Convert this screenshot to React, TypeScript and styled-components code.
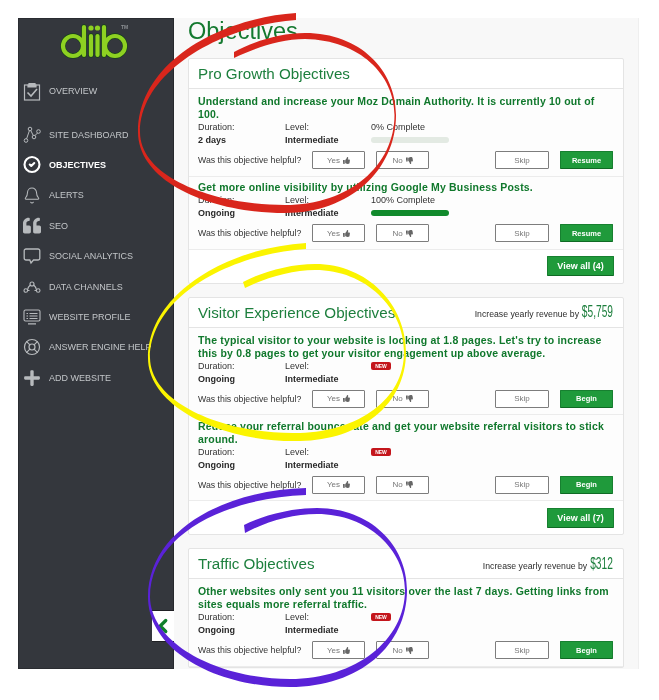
import React from "react";
import styled, { createGlobalStyle } from "styled-components";
import { CircleCheck, Bell, LifeBuoy, ChevronLeft } from "lucide-react";
import { FaQuoteLeft, FaPlus, FaThumbsUp, FaThumbsDown } from "react-icons/fa";

const Global = createGlobalStyle`
  html, body { margin: 0; padding: 0; background: #fff; }
  body { font-family: "Liberation Sans", Arial, sans-serif; }
`;

const Stage = styled.div`
  position: relative;
  width: 659px;
  height: 700px;
  overflow: hidden;
  background: #fff;
`;
const Page = styled.div`
  display: flex;
  padding: 18px 20px 0 18px;
  height: 651px;
  filter: blur(0.35px);
`;
const Sidebar = styled.nav`
  position: relative;
  width: 156px;
  height: 651px;
  flex: none;
  box-sizing: border-box;
  background: #34373d;
  border: 1px solid #2a2c31;
  border-right-color: #26282c;
`;
const LogoBox = styled.div`
  height: 57px;
  padding-left: 41px;
  box-sizing: border-box;
  position: relative;
`;
const Tm = styled.span`
  position: absolute;
  left: 102px;
  top: 5px;
  font-size: 5px;
  font-weight: 700;
  color: #8b8f93;
`;
const NavList = styled.div`
  display: flex;
  flex-direction: column;
`;
const NavItem = styled.div<{ $top?: number; $active?: boolean }>`
  display: flex;
  align-items: center;
  gap: 8px;
  height: 30.4px;
  margin-top: ${(p) => p.$top ?? 0}px;
  padding-left: 4px;
  color: ${(p) => (p.$active ? "#fff" : "#c3c6c9")};
  font-size: 9px;
  font-weight: ${(p) => (p.$active ? 700 : 400)};
  white-space: nowrap;
`;
const NavIcon = styled.span<{ $active?: boolean }>`
  width: 18px;
  height: 18px;
  flex: none;
  display: flex;
  align-items: center;
  justify-content: center;
  color: ${(p) => (p.$active ? "#fff" : "#b7babd")};
`;
const Collapse = styled.div`
  position: absolute;
  left: 133px;
  top: 591px;
  width: 22px;
  height: 32px;
  background: #fff;
  border-top: 1px solid #1f2024;
  border-bottom: 1px solid #1f2024;
  box-sizing: border-box;
  display: flex;
  align-items: center;
  justify-content: center;
  color: #0f7f2c;
`;
const Main = styled.main`
  width: 465px;
  height: 651px;
  flex: none;
  box-sizing: border-box;
  padding: 0 14px 0 14px;
  background: #f8f8f8;
  border-right: 1px solid #efefef;
  overflow: hidden;
`;
const PageTitle = styled.h1`
  margin: 0;
  height: 40px;
  line-height: 27px;
  font-size: 23.5px;
  font-weight: 400;
  color: #14792f;
`;
const Card = styled.section`
  background: #fff;
  border: 1px solid #e4e4e4;
  border-radius: 2px;
  margin-bottom: 13px;
  box-sizing: border-box;
`;
const CardHead = styled.header`
  height: 29px;
  padding: 0 10px 0 9px;
  display: flex;
  align-items: center;
  justify-content: space-between;
  border-bottom: 1px solid #e4e4e4;
`;
const CardTitle = styled.h2`
  margin: 0;
  font-size: 15.2px;
  font-weight: 400;
  color: #1d7f3d;
`;
const Revenue = styled.div`
  display: flex;
  align-items: baseline;
  gap: 3px;
  font-size: 8.7px;
  color: #2b2b2b;
`;
const Amount = styled.span<{ $trim: number }>`
  display: inline-block;
  font-size: 17px;
  color: #1d7f3d;
  transform: scaleX(0.6);
  transform-origin: right center;
  margin-left: -${(p) => p.$trim}px;
`;
const Row = styled.div`
  padding: 4.5px 10px 6.5px 9px;
  border-bottom: 1px solid #ececec;
  background: #fdfdfd;
  &:first-of-type { padding-top: 6px; }
`;
const RowTitle = styled.div`
  font-size: 10.5px;
  line-height: 13px;
  font-weight: 700;
  letter-spacing: 0.18px;
  color: #10782c;
`;
const Meta = styled.div`
  display: grid;
  grid-template-columns: 87px 86px 1fr;
  font-size: 9px;
  line-height: 13px;
  color: #333;
`;
const Value = styled.div`
  font-weight: 700;
  color: #2a2a2a;
`;
const New = styled.span`
  display: inline-block;
  width: 20px;
  height: 8px;
  line-height: 8px;
  border-radius: 2px;
  background: #c4161c;
  color: #fff;
  font-size: 5px;
  font-weight: 700;
  text-align: center;
  vertical-align: 1px;
`;
const Track = styled.div`
  width: 78px;
  height: 6px;
  margin-top: 3px;
  border-radius: 3px;
  background: #e3eae3;
  overflow: hidden;
`;
const Fill = styled.div`
  height: 100%;
  background: #118a2c;
`;
const Actions = styled.div`
  display: flex;
  align-items: center;
  margin-top: 4px;
  height: 18px;
`;
const Ask = styled.span`
  width: 114px;
  flex: none;
  font-size: 8.75px;
  color: #333;
  white-space: nowrap;
`;
const Ghost = styled.button<{ $left?: number; $wide?: boolean }>`
  width: ${(p) => (p.$wide ? 54 : 53)}px;
  height: 18px;
  padding: 0;
  margin-left: ${(p) => p.$left ?? 0}px;
  background: #fff;
  border: 1px solid #7d7d7d;
  border-radius: 1px;
  color: #777;
  font: 8px "Liberation Sans", Arial, sans-serif;
  display: inline-flex;
  align-items: center;
  justify-content: center;
  gap: 3px;
`;
const Solid = styled.button<{ $wide?: boolean; $left?: number }>`
  width: ${(p) => (p.$wide ? 67 : 53)}px;
  height: ${(p) => (p.$wide ? 20 : 18)}px;
  padding: 0;
  margin-left: ${(p) => p.$left ?? 0}px;
  background: #1f9a3b;
  border: 1px solid #178030;
  border-bottom-color: #0f6a24;
  border-radius: 1px;
  color: #fff;
  font: 700 ${(p) => (p.$wide ? 9 : 7.5)}px "Liberation Sans", Arial, sans-serif;
`;
const Foot = styled.footer`
  padding: 6.5px 9px 6.5px;
  display: flex;
  justify-content: flex-end;
`;
const Scribble = styled.svg`
  position: absolute;
  left: 0;
  top: 0;
  pointer-events: none;
`;

const Clipboard = () => (
  <svg width="18" height="19" viewBox="0 0 18 19" fill="none" stroke="currentColor" strokeWidth="1.2">
    <rect x="1.5" y="3" width="15" height="15" />
    <path d="M6 3V1.5H12V3H13V5H5V3Z" fill="currentColor" />
    <path d="M4.5 10.5 8 14 14 7" strokeWidth="1.6" />
  </svg>
);
const Bubble = () => (
  <svg width="18" height="18" viewBox="0 0 18 18" fill="none" stroke="currentColor" strokeWidth="1.3">
    <path d="M3 2H15A1.800 1.800 0 0 1 16.800 3.800V11.200A1.800 1.800 0 0 1 15 13H10.500L8 16L6.800 13H3A1.800 1.800 0 0 1 1.200 11.200V3.800A1.800 1.800 0 0 1 3 2Z" />
  </svg>
);
const Nodes = () => (
  <svg width="18" height="18" viewBox="0 0 18 18" fill="none" stroke="currentColor" strokeWidth="1">
    <circle cx="3" cy="14.5" r="1.8" /><circle cx="7" cy="3" r="1.8" /><circle cx="11" cy="11" r="1.8" /><circle cx="15.5" cy="5.5" r="1.8" />
    <path d="M3.6 12.8 6.4 4.7M7.8 4.6 10.2 9.4M12 9.5 14.5 7" />
  </svg>
);
const Channels = () => (
  <svg width="18" height="18" viewBox="0 0 18 18" fill="none" stroke="currentColor" strokeWidth="1.1">
    <circle cx="2.8" cy="12.5" r="1.8" /><circle cx="9" cy="6" r="2" /><circle cx="15.2" cy="12.5" r="1.8" />
    <path d="M4.5 12C5 9.5 6 8 7.3 7M10.7 7C12 8 13 9.5 13.5 12M4.6 12.5H6.5M11.5 12.5H13.4" />
  </svg>
);
const Profile = () => (
  <svg width="18" height="18" viewBox="0 0 18 18" fill="none" stroke="currentColor" strokeWidth="1.1">
    <rect x="1" y="2" width="16" height="11" rx="1.5" />
    <path d="M3.5 5.5H5M3.5 8H5M3.5 10.5H5M6.5 5.5H14.5M6.5 8H14.5M6.5 10.5H14.5M5 15.8H13" strokeWidth="1.2" />
  </svg>
);
const Logo = () => (
  <svg width="70" height="42" viewBox="0 0 70 42" fill="none" strokeLinecap="round">
    <g stroke="#14401a" strokeWidth="5.4">
      <circle cx="13" cy="27" r="10" /><path d="M24 8V36" /><circle cx="55" cy="27" r="10" /><path d="M44 8V36" /><path d="M31 17V36M37.5 17V36" />
    </g>
    <g stroke="#8ed122" strokeWidth="4.2">
      <circle cx="13" cy="27" r="10" /><path d="M24 8V36" /><circle cx="55" cy="27" r="10" /><path d="M44 8V36" /><path d="M31 17V36M37.5 17V36" />
    </g>
    <g fill="#8ed122"><circle cx="31" cy="9" r="2.6" /><circle cx="37.5" cy="9" r="2.6" /></g>
  </svg>
);

const nav = [
  { label: "OVERVIEW", icon: <Clipboard /> },
  { label: "SITE DASHBOARD", icon: <Nodes />, top: 13 },
  { label: "OBJECTIVES", icon: <CircleCheck size={19} strokeWidth={2.8} />, active: true },
  { label: "ALERTS", icon: <Bell size={19} strokeWidth={1.4} /> },
  { label: "SEO", icon: <FaQuoteLeft size={19} /> },
  { label: "SOCIAL ANALYTICS", icon: <Bubble /> },
  { label: "DATA CHANNELS", icon: <Channels /> },
  { label: "WEBSITE PROFILE", icon: <Profile /> },
  { label: "ANSWER ENGINE HELP", icon: <LifeBuoy size={18} strokeWidth={1.6} /> },
  { label: "ADD WEBSITE", icon: <FaPlus size={18} /> },
];

type Obj = { title: React.ReactNode; duration: string; isNew?: boolean; pct?: number; cta: string };

const Objective = ({ o }: { o: Obj }) => (
  <Row>
    <RowTitle>{o.title}</RowTitle>
    <Meta>
      <div>Duration:</div>
      <div>Level:</div>
      <div>{o.isNew ? <New>NEW</New> : `${o.pct}% Complete`}</div>
      <Value>{o.duration}</Value>
      <Value>Intermediate</Value>
      <div>{o.pct !== undefined && <Track><Fill style={{ width: `${o.pct}%` }} /></Track>}</div>
    </Meta>
    <Actions>
      <Ask>Was this objective helpful?</Ask>
      <Ghost>Yes <FaThumbsUp size={7} color="#666" /></Ghost>
      <Ghost $left={11}>No <FaThumbsDown size={7} color="#666" /></Ghost>
      <Ghost $left={66} $wide>Skip</Ghost>
      <Solid $left={11}>{o.cta}</Solid>
    </Actions>
  </Row>
);

const Section = ({ title, amount, trim, items, all }: { title: string; amount?: string; trim?: number; items: Obj[]; all?: string }) => (
  <Card>
    <CardHead>
      <CardTitle>{title}</CardTitle>
      {amount && <Revenue>Increase yearly revenue by <Amount $trim={trim ?? 0}>{amount}</Amount></Revenue>}
    </CardHead>
    {items.map((o, i) => <Objective key={i} o={o} />)}
    {all && <Foot><Solid $wide>{all}</Solid></Foot>}
  </Card>
);

export default function App() {
  return (
    <Stage>
      <Global />
      <Page>
        <Sidebar>
          <LogoBox><Logo /><Tm>TM</Tm></LogoBox>
          <NavList>
            {nav.map((n) => (
              <NavItem key={n.label} $top={n.top} $active={n.active}>
                <NavIcon $active={n.active}>{n.icon}</NavIcon>
                {n.label}
              </NavItem>
            ))}
          </NavList>
          <Collapse><ChevronLeft size={22} strokeWidth={3.6} /></Collapse>
        </Sidebar>
        <Main>
          <PageTitle>Objectives</PageTitle>
          <Section
            title="Pro Growth Objectives"
            all="View all (4)"
            items={[
              { title: "Understand and increase your Moz Domain Authority. It is currently 10 out of 100.", duration: "2 days", pct: 0, cta: "Resume" },
              { title: "Get more online visibility by utilizing Google My Business Posts.", duration: "Ongoing", pct: 100, cta: "Resume" },
            ]}
          />
          <Section
            title="Visitor Experience Objectives"
            amount="$5,759"
            trim={21}
            all="View all (7)"
            items={[
              { title: "The typical visitor to your website is looking at 1.8 pages. Let's try to increase this by 0.8 pages to get your visitor engagement up above average.", duration: "Ongoing", isNew: true, cta: "Begin" },
              { title: "Reduce your referral bounce rate and get your website referral visitors to stick around.", duration: "Ongoing", isNew: true, cta: "Begin" },
            ]}
          />
          <Section
            title="Traffic Objectives"
            amount="$312"
            trim={15}
            items={[
              { title: "Other websites only sent you 11 visitors over the last 7 days. Getting links from sites equals more referral traffic.", duration: "Ongoing", isNew: true, cta: "Begin" },
            ]}
          />
        </Main>
      </Page>
      <Scribble width="659" height="700" viewBox="0 0 659 700">
        <path fill="#d9261c" d="M296 13C220 18 138 62 138 132C138 182 210 213 285 213C350 213 396 170 396 115C396 70 360 33 305 33C280 33 252 42 234 52L234 58C255 48 280 39 305 39C360 40 394.500 75 394.500 115C394.500 165 350 205 285 205C215 205 140 178 140 132C140 70 225 25 296 20Z" />
        <path fill="#fbf400" d="M306 243C225 248 148 295 148 358C148 408 225 443 300 441C360 440 406 405 406 352C406 305 368 264 315 264C290 264 262 272 243 282L245 288C265 278 292 270 315 270C366 270 404 308 404 352C404 400 358 431 300 433C228 435 151 405 150 358C150 298 228 254 306 249Z" />
        <path fill="#5a22d8" d="M306 488C225 490 148 530 148 597C148 650 215 687 290 687C360 687 407 645 407 590C407 545 370 508 317 508C290 508 262 516 244 525L245 533C265 522 292 514 317 514C368 514 405 550 405 590C405 640 356 679 290 679C220 679 151 645 150 597C150 535 225 498 306 495Z" />
      </Scribble>
    </Stage>
  );
}
